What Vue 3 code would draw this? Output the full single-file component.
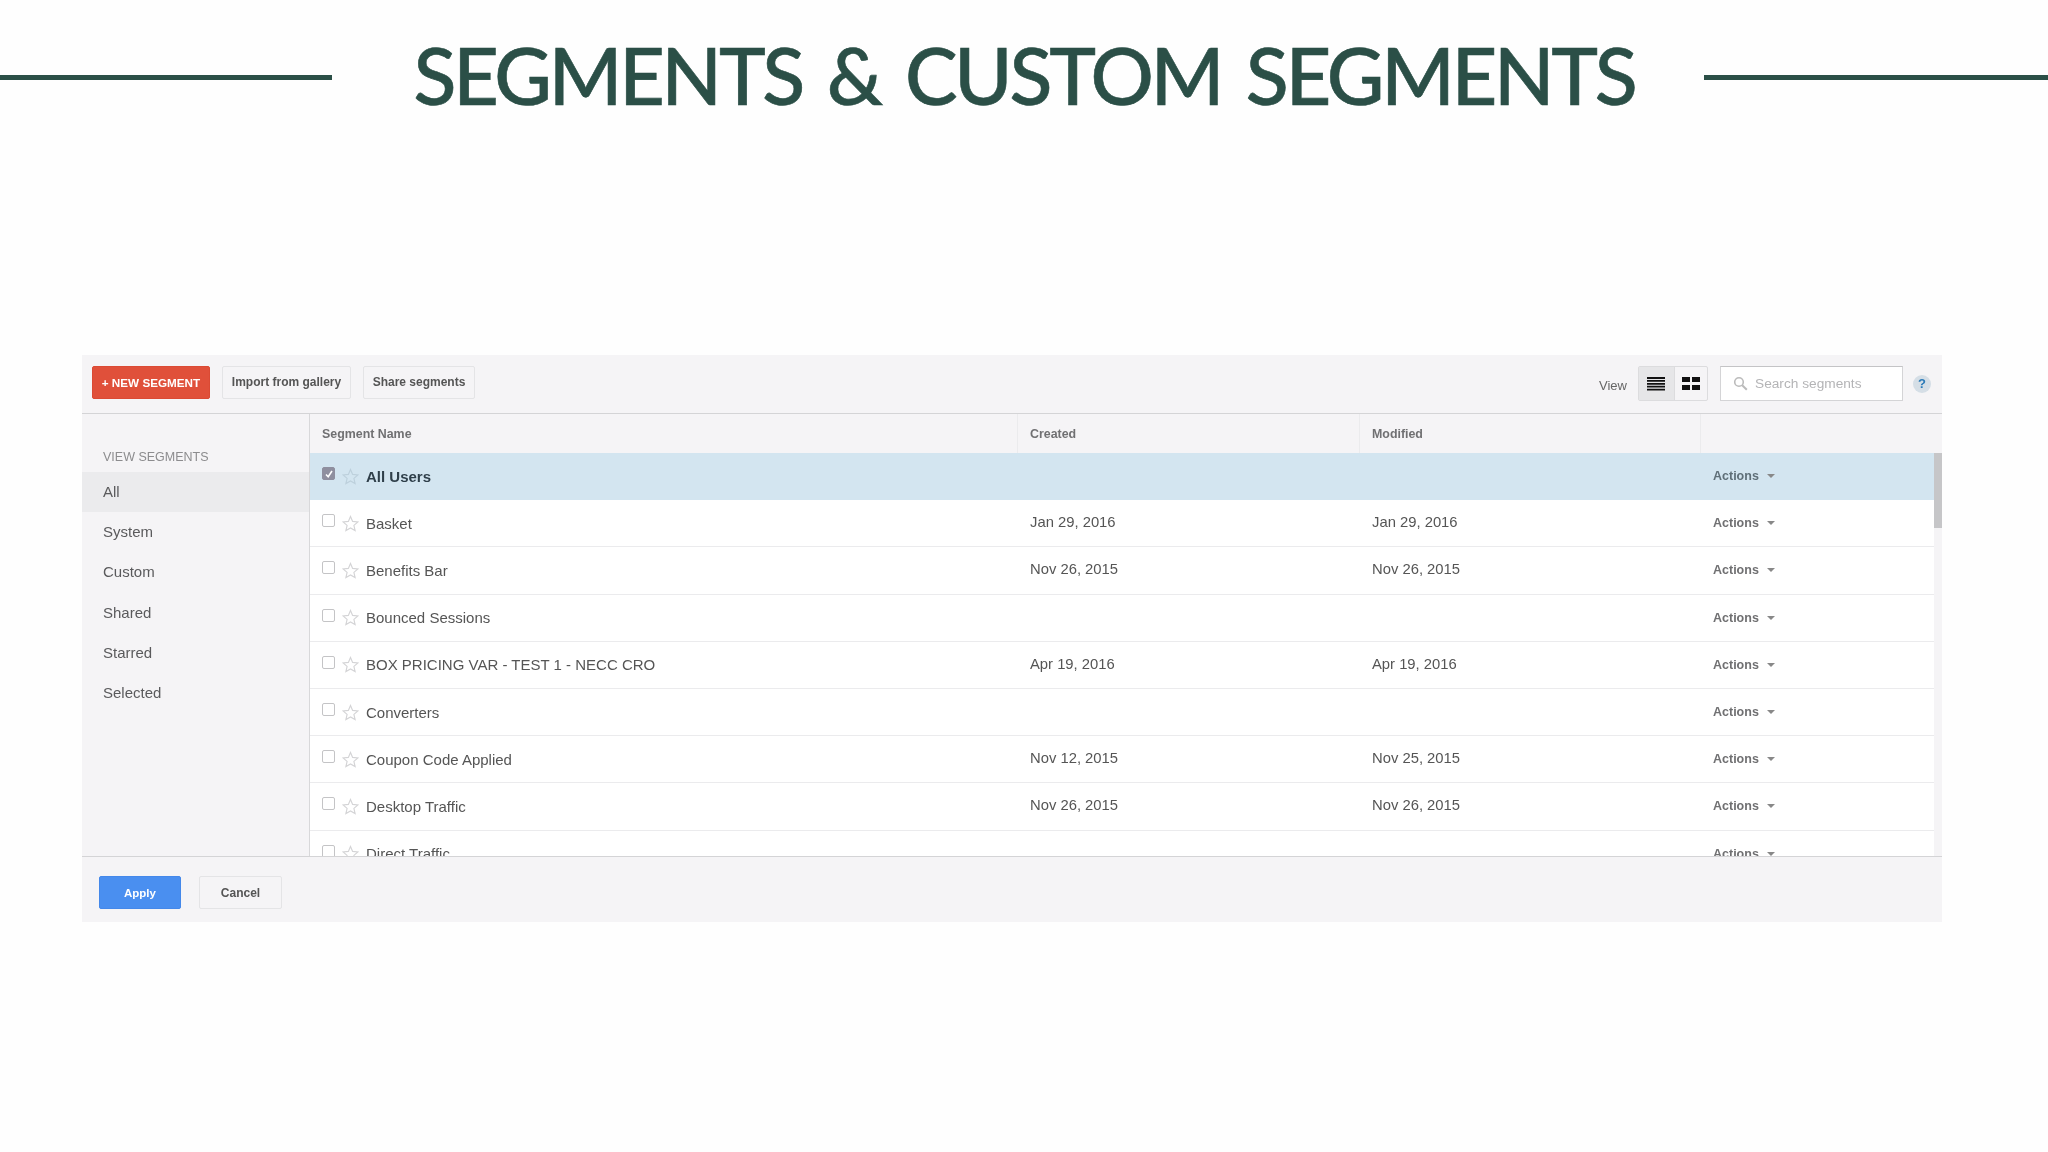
<script setup>
const navItems = ['All', 'System', 'Custom', 'Shared', 'Starred', 'Selected']
const rows = [
  { name: 'All Users', created: '', modified: '', selected: true },
  { name: 'Basket', created: 'Jan 29, 2016', modified: 'Jan 29, 2016' },
  { name: 'Benefits Bar', created: 'Nov 26, 2015', modified: 'Nov 26, 2015' },
  { name: 'Bounced Sessions', created: '', modified: '' },
  { name: 'BOX PRICING VAR - TEST 1 - NECC CRO', created: 'Apr 19, 2016', modified: 'Apr 19, 2016' },
  { name: 'Converters', created: '', modified: '' },
  { name: 'Coupon Code Applied', created: 'Nov 12, 2015', modified: 'Nov 25, 2015' },
  { name: 'Desktop Traffic', created: 'Nov 26, 2015', modified: 'Nov 26, 2015' },
  { name: 'Direct Traffic', created: '', modified: '' }
]
</script>

<template>
  <div class="page">
    <header class="title-row">
      <span class="rule"></span>
      <h1>SEGMENTS &amp; CUSTOM SEGMENTS</h1>
      <span class="rule"></span>
    </header>

    <section class="panel">
      <div class="toolbar">
        <button class="btn btn-red">+ NEW SEGMENT</button>
        <button class="btn btn-plain import">Import from gallery</button>
        <button class="btn btn-plain share">Share segments</button>
        <span class="spacer"></span>
        <span class="view-label">View</span>
        <div class="toggle">
          <span class="toggle-item on">
            <svg width="18" height="14" viewBox="0 0 18 14"><path d="M0 1h18M0 3.900h18M0 6.800h18M0 9.700h18M0 12.600h18" stroke="#111" stroke-width="1.800"/></svg>
          </span>
          <span class="toggle-item">
            <svg width="18" height="13" viewBox="0 0 18 13"><path d="M0 0h8v5H0zM10 0h8v5h-8zM0 8h8v5H0zM10 8h8v5h-8z" fill="#111"/></svg>
          </span>
        </div>
        <div class="search">
          <svg width="15" height="15" viewBox="0 0 15 15"><circle cx="6" cy="6" r="4.300" fill="none" stroke="#bbb" stroke-width="1.600"/><path d="M9.200 9.200l4.600 4.600" stroke="#bbb" stroke-width="2"/></svg>
          <span>Search segments</span>
        </div>
        <span class="help">?</span>
      </div>

      <div class="middle">
        <aside class="side">
          <div class="side-title">VIEW SEGMENTS</div>
          <div v-for="item in navItems" :key="item" class="side-item" :class="{ active: item === 'All' }">{{ item }}</div>
        </aside>

        <div class="table">
          <div class="head">
            <span class="cell">Segment Name</span>
            <span class="cell">Created</span>
            <span class="cell">Modified</span>
            <span class="cell"></span>
          </div>
          <div class="body">
            <div class="list">
              <div v-for="row in rows" :key="row.name" class="row" :class="{ selected: row.selected }">
                <span class="cell name-cell">
                  <span class="check">
                    <svg v-if="row.selected" width="10" height="10" viewBox="0 0 10 10"><path d="M2 5.500l2.200 2.300L8 2" fill="none" stroke="#fff" stroke-width="1.600"/></svg>
                  </span>
                  <svg class="star" width="17" height="17" viewBox="0 0 24 24"><path d="M12 2l3 7 7.500.700-5.700 5 1.700 7.300L12 18.200 5.500 22l1.700-7.300-5.700-5L9 9z" fill="none" :stroke="row.selected ? '#bdd0dc' : '#d4d4d6'" stroke-width="1.600"/></svg>
                  <span class="name">{{ row.name }}</span>
                </span>
                <span class="cell date">{{ row.created }}</span>
                <span class="cell date">{{ row.modified }}</span>
                <span class="cell actions">Actions<i class="caret"></i></span>
              </div>
            </div>
            <div class="track"><div class="thumb"></div></div>
          </div>
        </div>
      </div>

      <div class="footer">
        <button class="btn btn-blue">Apply</button>
        <button class="btn btn-plain cancel">Cancel</button>
      </div>
    </section>
  </div>
</template>

<style>
html, body { margin: 0; background: #fefefe; }
</style>

<style scoped>
.page {
  height: 1152px;
  background: #fefefe;
  font-family: "Liberation Sans", Arial, sans-serif;
  overflow: hidden;
}
.title-row {
  height: 355px;
  box-sizing: border-box;
  padding-top: 25px;
  display: flex;
  align-items: flex-start;
  justify-content: space-between;
}
.title-row h1 {
  margin: 0 0 0 12px;
  font-family: Lato, sans-serif;
  font-weight: 500;
  font-size: 79px;
  letter-spacing: -3.200px;
  word-spacing: 8px;
  line-height: 100px;
  color: #2b4f47;
  -webkit-text-stroke: 0.6px #2b4f47;
  white-space: nowrap;
}
.rule {
  width: 332px;
  height: 5px;
  margin-top: 50px;
  background: #2b4f47;
}
.rule:last-child { width: 344px; }

.panel {
  margin-left: 82px;
  width: 1860px;
  background: #f5f4f6;
  color: #555;
  filter: blur(0.45px);
}
.toolbar {
  height: 58px;
  border-bottom: 1px solid #d4d4d6;
  display: flex;
  align-items: center;
  padding: 0 0 0 10px;
}
.btn {
  font-family: inherit;
  box-sizing: border-box;
  height: 33px;
  padding: 0;
  border-radius: 2px;
  font-size: 12px;
  font-weight: 700;
}
.toolbar .btn { margin-bottom: 4px; }
.btn-red { width: 118px; background: #e0503a; border: 1px solid #db4a34; color: #fff; font-size: 11.700px; }
.btn-blue { width: 82px; background: #4a8ff0; border: 1px solid #4488ea; color: #fff; font-size: 11.500px; }
.btn-plain { background: #f5f4f6; border: 1px solid #e4e4e6; color: #555; }
.import { width: 129px; margin-left: 12px; }
.share { width: 112px; margin-left: 12px; }
.spacer { flex: 1; }
.view-label { font-size: 13px; color: #666; margin-right: 11px; margin-top: 2px; }
.toggle {
  display: flex;
  width: 70px;
  height: 35px;
  box-sizing: border-box;
  border: 1px solid #dcdcde;
  border-radius: 2px;
  margin-right: 12px;
  margin-bottom: 1px;
}
.toggle-item { flex: 1; display: flex; align-items: center; justify-content: center; }
.toggle-item.on { flex: none; width: 36px; box-sizing: border-box; padding-right: 1px; background: #e6e6e8; border-right: 1px solid #dcdcde; }
.search {
  width: 183px;
  height: 35px;
  box-sizing: border-box;
  background: #fff;
  border: 1px solid #d4d4d6;
  border-top-color: #c4c4c6;
  display: flex;
  align-items: center;
  padding-left: 12px;
  padding-bottom: 1px;
  margin-bottom: 1px;
  gap: 7px;
  font-size: 13.700px;
  color: #b4b4b6;
}
.help {
  width: 18px;
  height: 18px;
  border-radius: 50%;
  margin: 0 11px 1px 10px;
  background: #d5dee6;
  color: #2a7ab8;
  font-size: 13px;
  font-weight: 700;
  line-height: 18px;
  text-align: center;
}
.middle { display: flex; height: 442px; }
.side {
  width: 227px;
  border-right: 1px solid #d8d8da;
  flex: none;
}
.side-title {
  font-size: 12.500px;
  color: #8c8c8e;
  padding: 36px 0 0 21px;
  line-height: 15px;
  height: 22px;
}
.side-item {
  height: 40.200px;
  line-height: 40px;
  padding-left: 21px;
  font-size: 15px;
  color: #5a5a5c;
}
.side-item.active { background: #ebebed; }
.table { flex: 1; display: flex; flex-direction: column; min-width: 0; }
.head, .row {
  display: grid;
  grid-template-columns: 708px 342px 341px 233px;
  align-items: center;
}
.head { height: 39px; flex: none; font-size: 12.400px; font-weight: 700; color: #707072; }
.head .cell { height: 100%; display: flex; align-items: center; border-right: 1px solid #ebebed; box-sizing: border-box; padding-top: 1px; }
.head .cell:last-child { border-right: 0; }
.cell { padding-left: 12px; }
.body { flex: 1; display: flex; min-height: 0; overflow: hidden; }
.list { width: 1624px; background: #fff; }
.row {
  height: 47.200px;
  box-sizing: border-box;
  border-bottom: 1px solid #ebebed;
  background: #fff;
}
.row.selected { background: #d3e5f0; border-bottom-color: #d3e5f0; }
.name-cell { display: flex; align-items: center; }
.check {
  width: 13px;
  height: 13px;
  box-sizing: border-box;
  border: 1.500px solid #c4c4c6;
  border-radius: 2px;
  background: #fff;
  margin-top: -5px;
  display: flex;
  align-items: center;
  justify-content: center;
}
.selected .check { background: #8f8f9f; border-color: #8f8f9f; }
.star { margin-left: 7px; margin-right: 7px; }
.name { font-size: 15px; color: #555; }
.selected .name { font-weight: 700; color: #2f3f4a; }
.date { font-size: 14.800px; color: #555; margin-top: -2px; }
.actions { font-size: 12.500px; font-weight: 700; color: #707072; display: flex; align-items: center; }
.selected .actions { color: #5f6f78; }
.caret {
  margin-left: 8px;
  width: 0;
  height: 0;
  border-left: 4px solid transparent;
  border-right: 4px solid transparent;
  border-top: 4px solid #888;
}
.track { width: 8px; flex: none; background: #f5f4f6; }
.thumb { height: 75px; background: #c6c6c8; }
.footer {
  height: 66px;
  box-sizing: border-box;
  border-top: 1px solid #d4d4d6;
  display: flex;
  align-items: flex-start;
  padding: 19px 0 0 17px;
}
.cancel { width: 83px; margin-left: 18px; }
</style>
